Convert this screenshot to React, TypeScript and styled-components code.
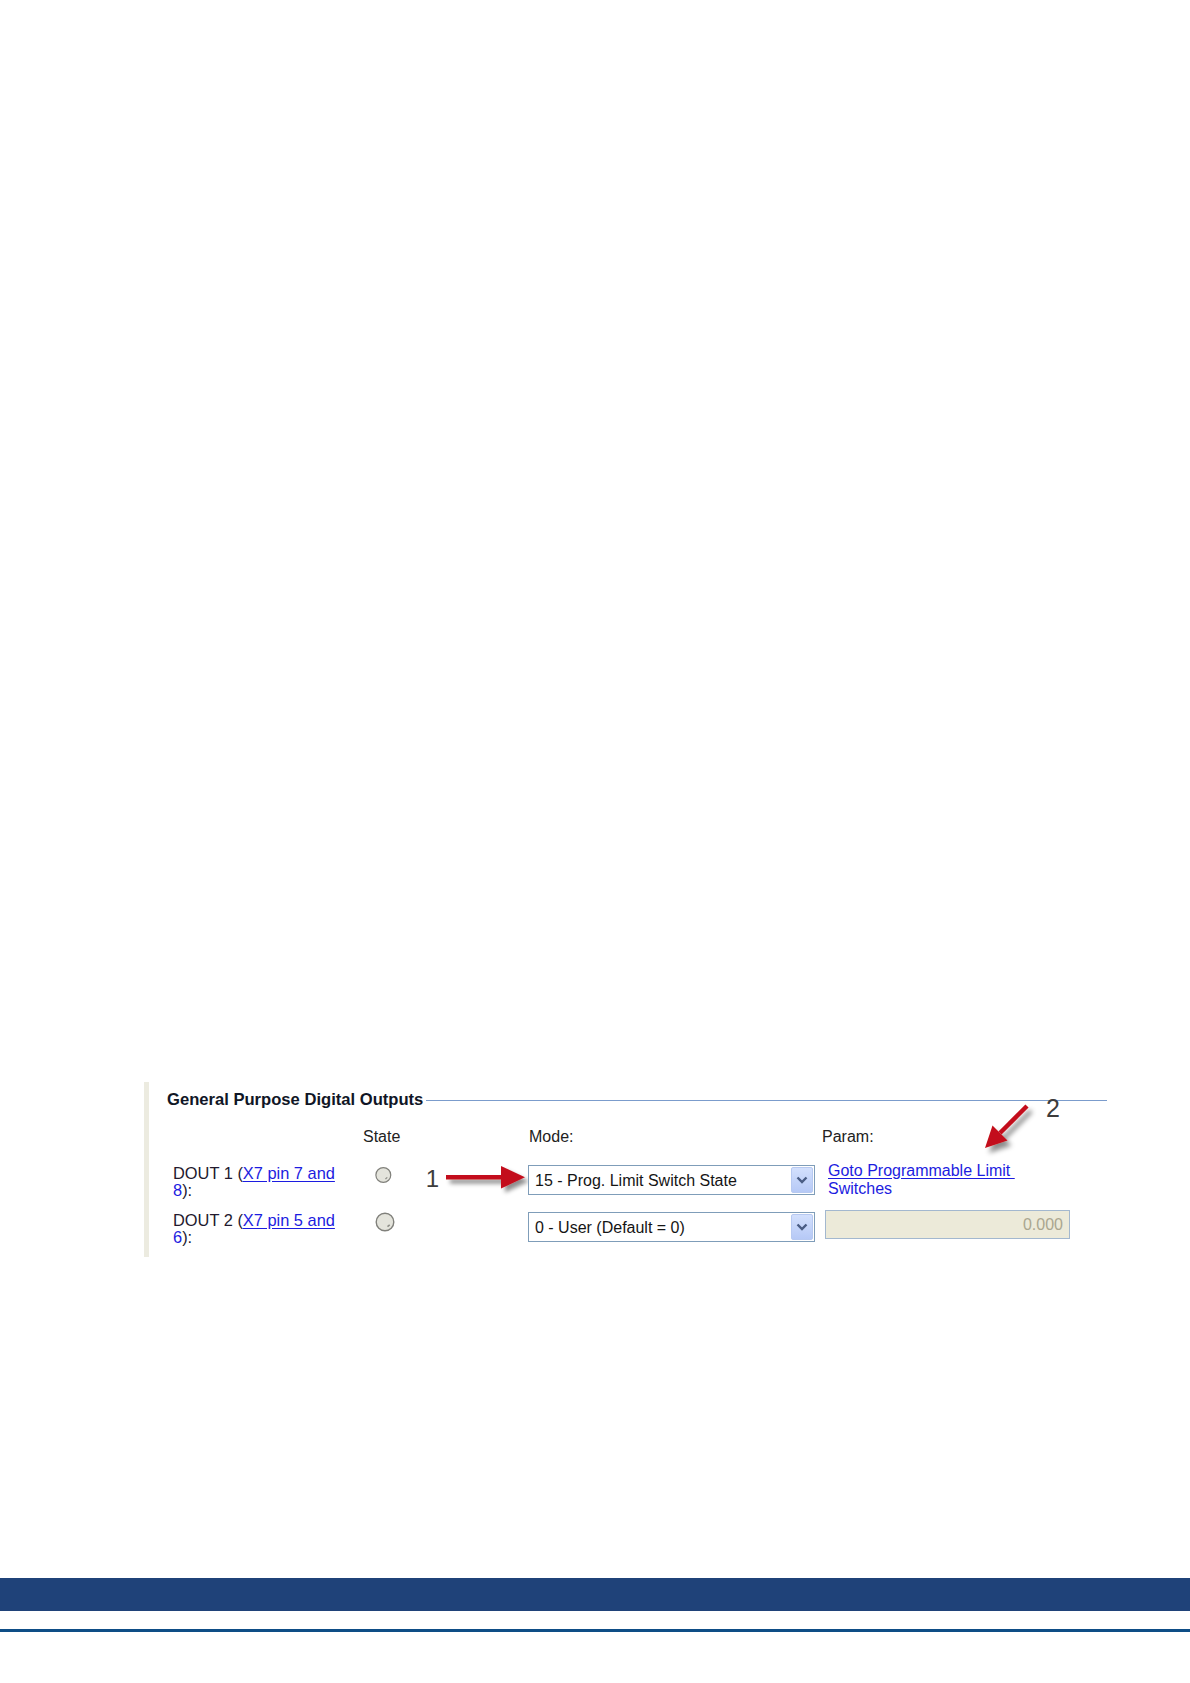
import { FC } from 'react';
import styled, { createGlobalStyle } from 'styled-components';

const GlobalStyle = createGlobalStyle`
  html, body {
    margin: 0;
    padding: 0;
    background: #ffffff;
  }
  body {
    font-family: "Liberation Sans", Arial, sans-serif;
    color: #1e1e2a;
  }
`;

const Page = styled.div`
  display: flex;
  flex-direction: column;
  min-height: 1683px;
`;

const Main = styled.main`
  flex: 1;
  padding: 1082px 0 0 144px;
`;

const Panel = styled.section`
  position: relative;
  width: 963px;
  border-left: 5px solid #ecebe0;
  padding: 8px 0 11px 18px;
`;

const Legend = styled.div`
  display: flex;
  align-items: center;
  width: 940px;
  height: 20px;
`;

const LegendTitle = styled.h2`
  margin: 0;
  font-size: 16.6px;
  line-height: 20px;
  font-weight: bold;
  color: #101626;
  white-space: nowrap;
`;

const LegendRule = styled.div`
  flex: 1;
  height: 1px;
  margin-left: 3px;
  background: #7b9ccc;
`;

const Table = styled.div`
  display: flex;
  flex-direction: column;
  margin: 18px 0 0 6px;
`;

const Row = styled.div<{ $gapBelow: number }>`
  display: grid;
  grid-template-columns: 190px 165px 294px 248px;
  align-items: start;
  margin-bottom: ${(p) => p.$gapBelow}px;
  font-size: 16px;
  line-height: 17px;
`;

const Heading = styled.div<{ $indent?: number }>`
  font-size: 16px;
  line-height: 18px;
  color: #222;
  padding-left: ${(p) => p.$indent ?? 0}px;
`;

const Label = styled.div`
  width: 170px;
  font-size: 16.4px;
  color: #22192e;
`;

const LinkText = styled.a<{ $underline?: boolean }>`
  color: #1c1ce0;
  cursor: pointer;
  text-decoration: ${(p) => (p.$underline ? 'underline' : 'none')};
  text-underline-offset: 2px;
`;

const StateCell = styled.div`
  display: flex;
  align-items: flex-start;
  padding-left: 11px;
`;

const Callout = styled.span`
  margin: 2px 0 0 33px;
  font-size: 24px;
  line-height: 24px;
  color: #3c3c3c;
`;

const ArrowSvg = styled.svg`
  margin: -2px 0 0 7px;
  overflow: visible;
`;

const Select = styled.div<{ $offset: number }>`
  display: flex;
  align-items: center;
  justify-content: space-between;
  box-sizing: border-box;
  width: 287px;
  height: 30px;
  margin-top: ${(p) => p.$offset}px;
  padding: 0 1px 0 6px;
  border: 1px solid #7f9db9;
  background: #fff;
  color: #151515;
  font-size: 16px;
`;

const SelectButton = styled.div`
  display: flex;
  align-items: center;
  justify-content: center;
  width: 22px;
  height: 26px;
  border: 1px solid #b7c9f1;
  border-radius: 2px;
  box-sizing: border-box;
  background: linear-gradient(#d3e0fd, #b6c9f6);
`;

const ParamLink = styled.div`
  margin: -3.5px 0 0 6px;
  line-height: 18px;
`;

const DisabledInput = styled.div`
  box-sizing: border-box;
  width: 245px;
  height: 29px;
  margin: -2px 0 0 3px;
  padding: 0 6px;
  display: flex;
  align-items: center;
  justify-content: flex-end;
  border: 1px solid #a3b8cf;
  background: #ecead9;
  color: #aaa68f;
  font-size: 16px;
`;

const Annotation = styled.div`
  position: absolute;
  left: 826px;
  top: 14px;
  display: flex;
  align-items: flex-start;
`;

const AnnotationDigit = styled.span`
  margin-left: 6px;
  font-size: 25px;
  line-height: 25px;
  color: #3c3c3c;
`;

const FooterBand = styled.div`
  height: 33px;
  background: #1f4279;
`;

const FooterRule = styled.div`
  height: 3px;
  margin: 18px 0 51px;
  background: #0e4d86;
`;

const Led: FC = () => (
  <svg width="22" height="20" viewBox="0 0 22 20">
    <circle cx="11" cy="10" r="8.8" fill="#e4e4dc" stroke="#80807b" strokeWidth="1.4" />
    <path d="M13.5 14.6 l2.2 -1.8" stroke="#8e8e88" strokeWidth="1.5" />
  </svg>
);

const Chevron: FC = () => (
  <svg width="14" height="10" viewBox="0 0 14 10">
    <path d="M2.5 2.5 L7 7 L11.5 2.5" fill="none" stroke="#4a5d84" strokeWidth="2.4" />
  </svg>
);

const RedArrowRight: FC = () => (
  <ArrowSvg width="82" height="28" viewBox="0 0 82 28">
    <defs>
      <filter id="shadowA" x="-20%" y="-40%" width="150%" height="200%">
        <feDropShadow dx="4" dy="4" stdDeviation="2.2" floodColor="#000" floodOpacity="0.45" />
      </filter>
    </defs>
    <g filter="url(#shadowA)">
      <rect x="0" y="12" width="58" height="4.5" fill="#c3101c" />
      <polygon points="55,3 79,14.2 55,25.5" fill="#c3101c" />
    </g>
  </ArrowSvg>
);

const RedArrowDiagonal: FC = () => (
  <svg width="65" height="60" viewBox="0 0 65 60" style={{ overflow: 'visible', marginTop: 4 }}>
    <defs>
      <filter id="shadowB" x="-30%" y="-30%" width="170%" height="170%">
        <feDropShadow dx="4" dy="5" stdDeviation="2.4" floodColor="#000" floodOpacity="0.45" />
      </filter>
    </defs>
    <g filter="url(#shadowB)">
      <line x1="52" y1="6" x2="25" y2="33" stroke="#c3101c" strokeWidth="4.5" />
      <polygon points="10,48 32.5,40.5 17.5,25.5" fill="#c3101c" />
    </g>
  </svg>
);

type OutputRowProps = {
  index: number;
  pins: string;
  lastPin: string;
  mode: string;
  selectOffset: number;
  gapBelow: number;
  showCallout?: boolean;
  param: JSX.Element;
};

const OutputRow: FC<OutputRowProps> = ({ index, pins, lastPin, mode, selectOffset, gapBelow, showCallout, param }) => (
  <Row $gapBelow={gapBelow}>
    <Label>
      DOUT {index} (<LinkText $underline>{pins}</LinkText>
      <br />
      <LinkText>{lastPin}</LinkText>):
    </Label>
    <StateCell>
      <Led />
      {showCallout && (
        <>
          <Callout>1</Callout>
          <RedArrowRight />
        </>
      )}
    </StateCell>
    <Select $offset={selectOffset}>
      <span>{mode}</span>
      <SelectButton>
        <Chevron />
      </SelectButton>
    </Select>
    {param}
  </Row>
);

export default function App() {
  return (
    <Page>
      <GlobalStyle />
      <Main>
        <Panel>
          <Legend>
            <LegendTitle>General Purpose Digital Outputs</LegendTitle>
            <LegendRule />
          </Legend>
          <Table>
            <Row $gapBelow={19}>
              <div />
              <Heading>State</Heading>
              <Heading $indent={1}>Mode:</Heading>
              <Heading>Param:</Heading>
            </Row>
            <OutputRow
              index={1}
              pins="X7 pin 7 and"
              lastPin="8"
              mode="15 - Prog. Limit Switch State"
              selectOffset={0}
              gapBelow={13}
              showCallout
              param={
                <ParamLink>
                  <LinkText $underline>Goto Programmable Limit&nbsp;</LinkText>
                  <br />
                  <LinkText>Switches</LinkText>
                </ParamLink>
              }
            />
            <OutputRow
              index={2}
              pins="X7 pin 5 and"
              lastPin="6"
              mode="0 - User (Default = 0)"
              selectOffset={0}
              gapBelow={0}
              param={<DisabledInput>0.000</DisabledInput>}
            />
          </Table>
          <Annotation>
            <RedArrowDiagonal />
            <AnnotationDigit>2</AnnotationDigit>
          </Annotation>
        </Panel>
      </Main>
      <FooterBand />
      <FooterRule />
    </Page>
  );
}
